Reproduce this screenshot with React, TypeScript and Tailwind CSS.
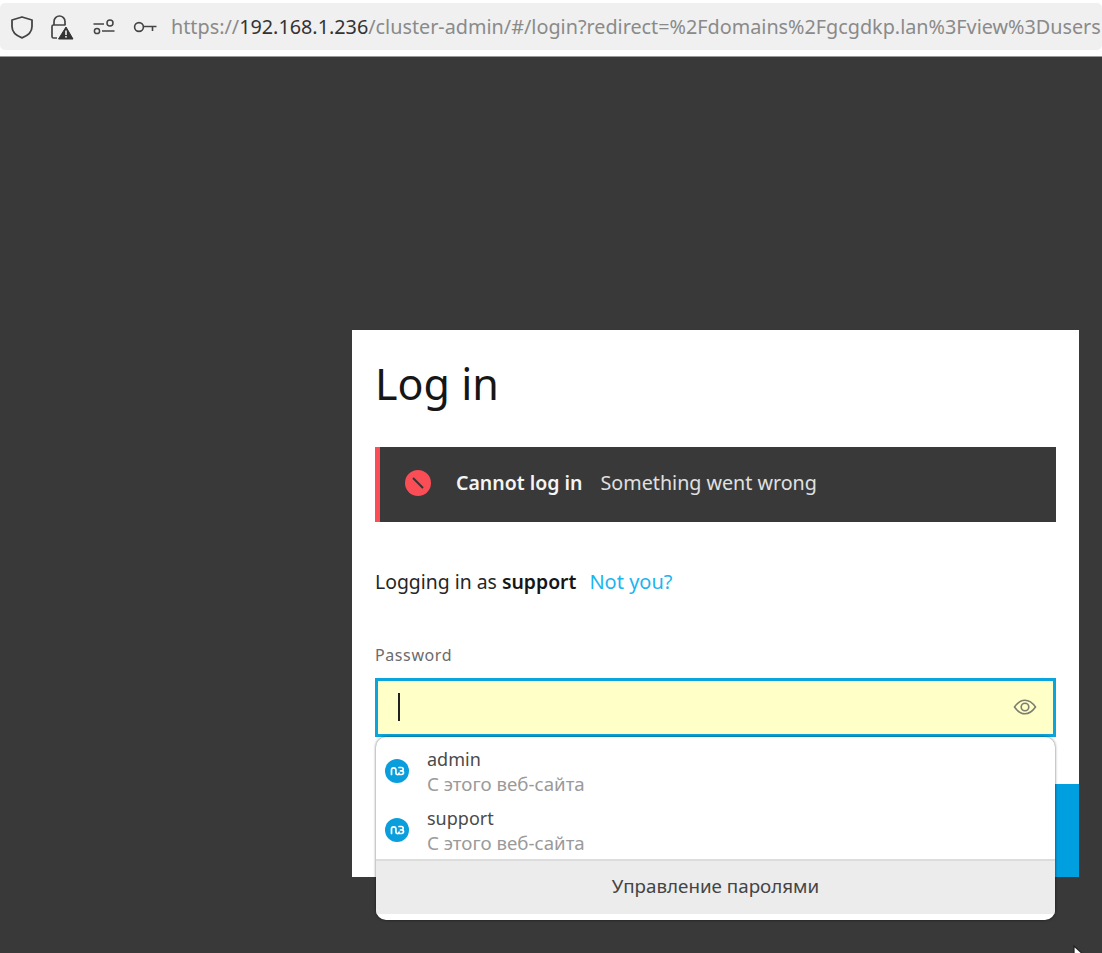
const sans = "font-['Noto_Sans','Liberation_Sans',sans-serif]";

function ShieldIcon() {
  return (
    <svg className="shrink-0" width="24" height="24" viewBox="0 0 24 24" fill="none" stroke="#444" strokeWidth="1.8">
      <path d="M12 2 L22 5 V11.5 C22 17 18 20.6 12 22.8 C6 20.6 2 17 2 11.5 V5 Z" strokeLinejoin="round" />
    </svg>
  );
}

function LockWarnIcon() {
  return (
    <svg className="shrink-0" width="26" height="26" viewBox="0 0 26 26" fill="none">
      <path d="M6 11 V7.5 a5.5 5.5 0 0 1 11 0 V11" stroke="#444" strokeWidth="1.7" />
      <path d="M9 24 H5.5 a1.5 1.5 0 0 1 -1.5 -1.5 V12.5 a1.5 1.5 0 0 1 1.5 -1.5 H17.5" stroke="#444" strokeWidth="1.7" />
      <path d="M18 13 L25 25 H10.5 Z" fill="#333" stroke="#333" strokeLinejoin="round" />
      <rect x="17.2" y="16.5" width="1.6" height="4.5" fill="#f0f0f0" />
      <rect x="17.2" y="22" width="1.6" height="1.6" fill="#f0f0f0" />
    </svg>
  );
}

function PermsIcon() {
  return (
    <svg className="shrink-0" width="22" height="16" viewBox="0 0 22 16" fill="none" stroke="#444" strokeWidth="1.5">
      <path d="M0.5 5 H11" />
      <circle cx="17" cy="4" r="3" />
      <circle cx="4" cy="12" r="2.6" />
      <path d="M9 12 H21.5" />
    </svg>
  );
}

function KeyIcon() {
  return (
    <svg className="shrink-0" width="24" height="12" viewBox="0 0 24 12" fill="none" stroke="#444" strokeWidth="1.6">
      <circle cx="6" cy="6" r="4.4" />
      <path d="M10.5 5.5 H23.5 M19.5 5.5 V10" />
    </svg>
  );
}

function SiteIcon() {
  return (
    <svg className="shrink-0" width="24" height="24" viewBox="0 0 24 24" fill="none">
      <circle cx="12" cy="12" r="12" fill="#0a9fdc" />
      <path d="M6.5 15.5 V11 a2.2 2.2 0 0 1 4.4 0 V14 a1.6 1.6 0 0 0 3.2 0 M14 8.5 h2.5 a1.6 1.6 0 0 1 0 3.4 h-1 M15.5 11.9 h1.2 a1.7 1.7 0 0 1 0 3.6 h-2.2" stroke="white" strokeWidth="1.7" strokeLinecap="round" />
    </svg>
  );
}

function EyeIcon() {
  return (
    <svg className="shrink-0" width="24" height="16" viewBox="0 0 24 16" fill="none" stroke="#7d7d70" strokeWidth="1.6">
      <path d="M1.5 8 C5 3 8.5 1.2 12 1.2 C15.5 1.2 19 3 22.5 8 C19 13 15.5 14.8 12 14.8 C8.5 14.8 5 13 1.5 8 Z" />
      <circle cx="12" cy="8" r="3.8" />
    </svg>
  );
}

function SavedLogin({ name }: { name: string }) {
  return (
    <div className="flex items-center h-[59px] pl-[9px] gap-[18px]">
      <SiteIcon />
      <div className={`${sans} pt-[2px]`}>
        <div className="text-[18px] leading-[24px] text-[#4a4a4a]">{name}</div>
        <div className="text-[18.7px] leading-[25px] text-[#9a9a9a]">С этого веб-сайта</div>
      </div>
    </div>
  );
}

export default function App() {
  return (
    <div className="relative w-[1102px] h-[953px] overflow-hidden bg-[#393939]">
      <div className="bg-white h-[57px] pt-[3px] border-b border-[#9a9a9a]">
        <div className="flex items-center h-[47px] bg-[#f0f0f0] rounded-[5px] pl-[10px] overflow-hidden">
          <ShieldIcon />
          <div className="ml-[14px] shrink-0"><LockWarnIcon /></div>
          <div className="ml-[19px] shrink-0"><PermsIcon /></div>
          <div className="ml-[18px] shrink-0"><KeyIcon /></div>
          <div className={`ml-[14px] ${sans} text-[19.8px] whitespace-nowrap text-[#8a8a8a]`}>
            https://<span className="text-[#333]">192.168.1.236</span>/cluster-admin/#/login?redirect=%2Fdomains%2Fgcgdkp.lan%3Fview%3Dusers
          </div>
        </div>
      </div>

      <div className="relative ml-[352px] mt-[273px] w-[727px] h-[547px] bg-white pt-[23px] px-[23px]">
        <h1 className={`${sans} text-[43px] leading-[62px] text-[#161616]`}>Log in</h1>

        <div className="flex items-center mt-[32px] h-[75px] bg-[#393939] border-l-[5px] border-[#fa4d56] pl-[25px] pb-[4px]">
          <svg className="shrink-0" width="26" height="26" viewBox="0 0 26 26">
            <circle cx="13" cy="13" r="13" fill="#fa4d56" />
            <path d="M8 8 L18 18" stroke="#333" strokeWidth="2" />
          </svg>
          <span className={`${sans} ml-[25px] text-[19.5px] font-semibold text-[#f4f4f4]`}>Cannot log in</span>
          <span className={`${sans} ml-[18px] text-[19.7px] text-[#e0e0e0]`}>Something went wrong</span>
        </div>

        <div className={`${sans} mt-[46px] text-[19.4px] leading-[28px] text-[#262626] flex`}>
          <span>Logging in as <b className="font-semibold text-[#161616]">support</b></span>
          <span className="ml-[13px] text-[20px] text-[#1cb5f0]">Not you?</span>
        </div>

        <div className={`${sans} mt-[49px] text-[16px] leading-[20px] tracking-[0.6px] text-[#6b6b6b]`}>Password</div>

        <div className="flex items-center justify-between mt-[13px] h-[59px] border-[3px] border-[#0aa5dc] bg-[#ffffc8] pl-[20px] pr-[16px] pb-[2px]">
          <div className="w-[2px] h-[28px] bg-[#222]" />
          <EyeIcon />
        </div>

        <div className="absolute right-0 bottom-0 w-[500px] h-[93px] bg-[#009fdf]" />
      </div>

      <div className="absolute left-[376px] top-[737px] w-[679px] h-[183px] bg-white rounded-[10px] shadow-[0_0_3px_rgba(0,0,0,0.6)] overflow-hidden pt-[4px] pb-[6px] flex flex-col">
        <SavedLogin name="admin" />
        <SavedLogin name="support" />
        <div className={`${sans} flex-1 flex items-center justify-center bg-[#ececec] border-t-2 border-[#dcdcdc] pb-[3px] text-[18.8px] text-[#444]`}>
          Управление паролями
        </div>
      </div>

      <svg className="absolute left-[1072px] top-[945px]" width="16" height="12" viewBox="0 0 16 12" fill="white" stroke="#222" strokeWidth="1.2">
        <path d="M2 1 L14 12 H2 Z" />
      </svg>
    </div>
  );
}
